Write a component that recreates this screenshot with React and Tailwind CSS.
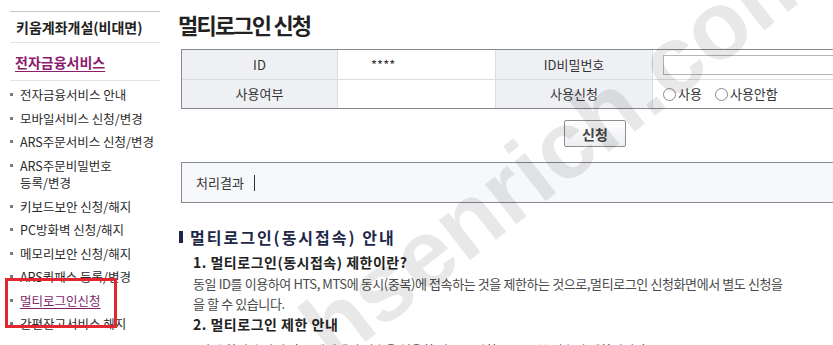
import React from "react";

const items = [
  { t: "전자금융서비스 안내" },
  { t: "모바일서비스 신청/변경" },
  { t: "ARS주문서비스 신청/변경" },
  { t: "ARS주문비밀번호 등록/변경", two: ["ARS주문비밀번호", "등록/변경"] },
  { t: "키보드보안 신청/해지" },
  { t: "PC방화벽 신청/해지" },
  { t: "메모리보안 신청/해지" },
  { t: "ARS퀵패스 등록/변경" },
  { t: "멀티로그인신청", active: true },
  { t: "간편잔고서비스 해지" },
];

function Radio({ label }) {
  return (
    <span className="flex items-center gap-[2px]">
      <span className="w-[13px] h-[13px] rounded-full border border-[#8a8a8a] bg-white" />
      <span>{label}</span>
    </span>
  );
}

export default function App() {
  return (
    <div className="relative w-[833px] h-[345px] overflow-hidden bg-white flex font-['Noto_Sans_CJK_KR',sans-serif] text-[#333]">
      {/* Sidebar */}
      <aside className="w-[160px] shrink-0 pl-[10px] pt-[11px]">
        <div className="h-[31px] border-t border-[#c3c7cf] flex items-center pl-[6px] text-[14px] font-bold text-[#222] leading-none">
          키움계좌개설(비대면)
        </div>
        <div className="h-[38px] border-t border-[#e1e3e8] flex items-center pl-[5px]">
          <span className="text-[14px] font-bold text-[#8c1c6e] underline underline-offset-[3px] leading-none">
            전자금융서비스
          </span>
        </div>
        <ul className="border-t border-[#e1e3e8] pt-[2px]">
          {items.map((it) => (
            <li key={it.t} className="relative py-[3px] pl-[10px] text-[12.5px] leading-[17.5px] text-[#2a2a2a]">
              <span className="absolute left-0 top-[10px] w-[3px] h-[3px] bg-[#7a7a7a]" />
              {it.two ? (
                <span className="block">
                  {it.two[0]}
                  <br />
                  {it.two[1]}
                </span>
              ) : it.active ? (
                <span className="text-[#7e1f6b] underline underline-offset-[2px]">{it.t}</span>
              ) : (
                <span className="whitespace-nowrap">{it.t}</span>
              )}
            </li>
          ))}
        </ul>
      </aside>

      {/* Main */}
      <main className="ml-[18px] flex-1 min-w-0">
        <div className="h-[49px] flex items-center pb-[2px]">
          <h1 className="text-[22px] font-bold tracking-[-1.8px] text-[#222] leading-none">
            멀티로그인 신청
          </h1>
        </div>

        <div className="ml-[3px] w-[720px] border-t border-b border-l border-[#868892] text-[13px]">
          <div className="grid grid-cols-[156px_158px_157px_249px] h-[30px] border-b border-[#dcdde2]">
            <div className="bg-[#eff0f4] flex items-center justify-center border-r border-[#dcdde2]">ID</div>
            <div className="flex items-center pl-[33px] border-r border-[#dcdde2]">****</div>
            <div className="bg-[#eff0f4] flex items-center justify-center border-r border-[#dcdde2]">ID비밀번호</div>
            <div className="flex items-center pl-[10px]">
              <div className="w-[220px] h-[20px] border border-[#b5b5b5] bg-white" />
            </div>
          </div>
          <div className="grid grid-cols-[156px_158px_157px_249px] h-[28px]">
            <div className="bg-[#eff0f4] flex items-center justify-center border-r border-[#dcdde2]">사용여부</div>
            <div className="border-r border-[#dcdde2]" />
            <div className="bg-[#eff0f4] flex items-center justify-center border-r border-[#dcdde2]">사용신청</div>
            <div className="flex items-center pl-[10px] gap-[13px]">
              <Radio label="사용" />
              <Radio label="사용안함" />
            </div>
          </div>
        </div>

        <div className="pl-[386px] mt-[11px]">
          <button className="w-[62px] h-[27px] rounded-[2px] border border-[#8e8e8e] bg-gradient-to-b from-white to-[#eceef2] text-[14px] font-bold text-[#444] leading-none">
            신청
          </button>
        </div>

        <div className="ml-[3px] mt-[15px] h-[41px] w-[720px] border-t border-b border-l border-[#868892] bg-[#f7f8fa] flex items-center pl-[14px] text-[13px]">
          <span>처리결과</span>
          <span className="ml-[10px] w-[1px] h-[16px] bg-[#333]" />
        </div>

        <div className="mt-[24px] flex items-center h-[20px]">
          <span className="ml-[1px] w-[4px] h-[12px] bg-[#1d2748]" />
          <span className="ml-[7px] text-[16px] font-bold tracking-[2px] text-[#1d2748] leading-none">
            멀티로그인(동시접속) 안내
          </span>
        </div>

        <div className="ml-[15px] mt-[5px]">
          <div className="h-[20px] flex items-center text-[14px] font-bold text-[#222] tracking-[0.5px]">
            1. 멀티로그인(동시접속) 제한이란?
          </div>
          <div className="pt-[2px] text-[13px] leading-[20px] tracking-[-0.4px] text-[#4a4a4a] whitespace-nowrap">
            동일 ID를 이용하여 HTS, MTS에 동시(중복)에 접속하는 것을 제한하는 것으로,멀티로그인 신청화면에서 별도 신청을
            <br />
            을 할 수 있습니다.
          </div>
          <div className="h-[20px] flex items-center text-[14px] font-bold text-[#222] tracking-[0.5px]">
            2. 멀티로그인 제한 안내
          </div>
          <div className="mt-[6px] ml-[6px] text-[13px] leading-[19px] tracking-[-0.4px] text-[#4a4a4a] whitespace-nowrap">
            아래 화면과 같이 다른 매체에서 접속을 허용할 경우 동일한 ID로 중복 접속이 제한됩니다.
          </div>
        </div>
      </main>

      {/* Annotation box */}
      <div className="pointer-events-none absolute left-[5px] top-[278px] w-[112px] h-[50px] border-[3px] border-[#e3262f]" />

      {/* Watermark */}
      <div className="pointer-events-none absolute left-[560px] top-[148px] -translate-x-1/2 -translate-y-1/2 -rotate-[38deg] whitespace-nowrap font-['Liberation_Sans',sans-serif] font-bold text-[96px] leading-none text-[rgba(0,0,0,0.09)]">
        hsenrich.com
      </div>
    </div>
  );
}
